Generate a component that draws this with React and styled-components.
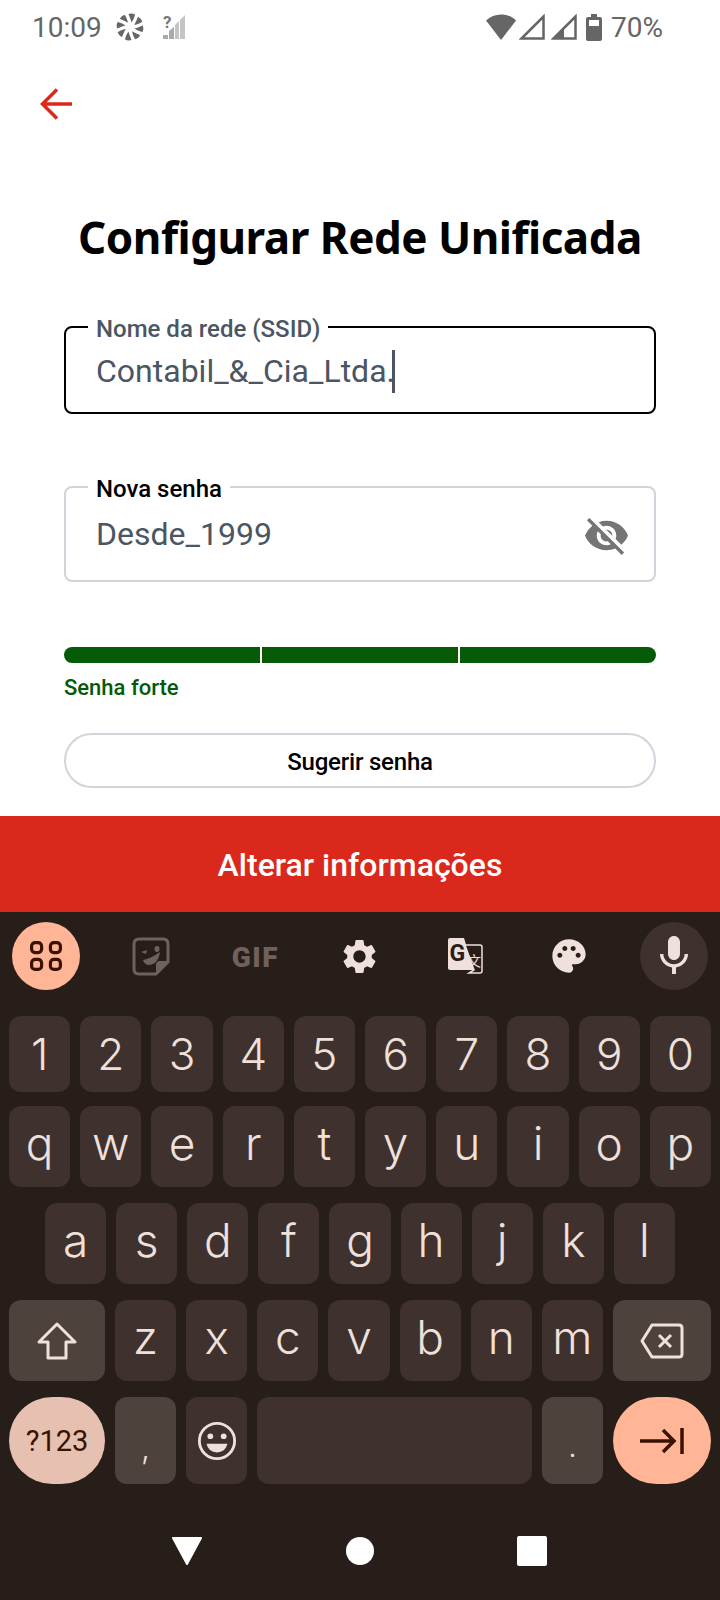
import React from 'react'
import styled, { createGlobalStyle } from 'styled-components'
import { MdMic, MdPalette, MdSettings, MdVisibilityOff } from 'react-icons/md'

const Global = createGlobalStyle`
  html, body { margin: 0; padding: 0; background: #fff; }
  * { box-sizing: border-box; }
`

const Phone = styled.div`
  width: 720px;
  height: 1600px;
  overflow: hidden;
  display: flex;
  flex-direction: column;
  font-family: Roboto, sans-serif;
  background: #fff;
`

const StatusBar = styled.div`
  height: 54px;
  padding: 0 57px 0 32px;
  display: flex;
  align-items: center;
  justify-content: space-between;
  color: #666;
  font-size: 28px;
`
const StatusGroup = styled.div`
  display: flex;
  align-items: center;
`
const Spacer = styled.span`
  width: ${p => p.$w}px;
`

const BackButton = styled.div`
  margin: 34px 0 0 40px;
  height: 32px;
  display: flex;
`

const Title = styled.h1`
  margin: 87px 0 0;
  font-family: 'Noto Sans', sans-serif;
  font-weight: 700;
  font-size: 44px;
  line-height: 60px;
  letter-spacing: -0.5px;
  text-align: center;
  color: #000;
`

const Form = styled.div`
  margin: 46px 64px 0;
  display: flex;
  flex-direction: column;
`

const Field = styled.fieldset`
  margin: ${p => p.$mt || 0}px 0 0;
  height: ${p => p.$h}px;
  min-width: 0;
  padding: ${p => p.$pt}px 24px 0 30px;
  display: flex;
  align-items: flex-start;
  justify-content: space-between;
  border: 2px solid ${p => (p.$active ? '#000' : '#d1d5db')};
  border-radius: 8px;
  legend {
    position: relative;
    top: 2px;
    margin-left: -8px;
    padding: 0 8px;
    font-size: 24px;
    font-weight: 500;
    line-height: 28px;
    color: ${p => (p.$active ? '#4b5563' : '#000')};
  }
`
const ValueRow = styled.div`
  display: flex;
  align-items: center;
  font-size: 32px;
  line-height: 44px;
  color: #4b5563;
`
const Caret = styled.span`
  width: 3px;
  height: 43px;
  margin-left: -3px;
  background: #4b5563;
`

const Strength = styled.div`
  margin-top: 65px;
  height: 16px;
  display: flex;
  gap: 2px;
  border-radius: 8px;
  overflow: hidden;
`
const StrengthPart = styled.div`
  flex: 1;
  background: #055a07;
`
const StrengthText = styled.div`
  margin-top: 11px;
  font-size: 22px;
  font-weight: 500;
  line-height: 28px;
  color: #055a07;
`
const SuggestButton = styled.button`
  margin-top: 31px;
  height: 55px;
  padding-top: 3px;
  background: #fff;
  border: 2px solid #d1d5db;
  border-radius: 28px;
  font-family: Roboto, sans-serif;
  font-size: 24px;
  font-weight: 500;
  letter-spacing: -0.2px;
  color: #000;
`
const SubmitButton = styled.button`
  margin-top: 28px;
  height: 96px;
  width: 100%;
  flex: none;
  padding-top: 3px;
  border: 0;
  background: #da291c;
  color: #fff;
  font-family: Roboto, sans-serif;
  font-size: 32px;
  font-weight: 500;
`

const Keyboard = styled.div`
  flex: 1;
  background: #271d19;
  color: #efe0db;
  display: flex;
  flex-direction: column;
  padding-top: 10px;
`
const Toolbar = styled.div`
  height: 68px;
  padding: 0 12px;
  margin-bottom: 26px;
  display: flex;
  align-items: center;
  justify-content: space-between;
`
const ToolSlot = styled.div`
  width: 68px;
  height: 68px;
  border-radius: 50%;
  display: flex;
  align-items: center;
  justify-content: center;
  background: ${p => p.$bg || 'transparent'};
`
const GifLabel = styled.span`
  padding-top: 3px;
  font-family: Roboto, sans-serif;
  font-weight: 900;
  font-size: 28px;
  letter-spacing: 1.5px;
  color: #6f625d;
`
const KeyRow = styled.div`
  height: ${p => p.$h}px;
  margin-bottom: ${p => p.$mb || 0}px;
  padding: 0 ${p => p.$inset || 9}px;
  display: flex;
  gap: 10px;
`
const Key = styled.div`
  flex: ${p => (p.$w ? `0 0 ${p.$w}px` : '1')};
  min-width: 0;
  border-radius: ${p => (p.$round ? '44px' : '12px')};
  background: ${p => p.$bg || '#3e312e'};
  display: flex;
  justify-content: center;
  align-items: ${p => (p.$low ? 'flex-end' : 'center')};
  padding-bottom: ${p => p.$pb || 0}px;
  font-family: Inter, sans-serif;
  font-weight: 300;
  font-size: ${p => p.$size || 46}px;
  line-height: 56px;
`
const SymbolsLabel = styled.span`
  font-family: Roboto, sans-serif;
  font-weight: 400;
  font-size: 29px;
  color: #3a1200;
`
const NavBar = styled.div`
  margin-top: 52px;
  padding-right: 3px;
  display: flex;
  align-items: center;
  justify-content: center;
  gap: 143px;
`

const Pinwheel = () => (
  <svg width="28" height="28" viewBox="0 0 28 28" fill="#666">
    {[0, 45, 90, 135, 180, 225, 270, 315].map(a => (
      <path key={a} d="M15.500 9.500C15 7 13.500 4 12.500 1Q16 0 19 1.500C18.500 4 17.500 7 15.500 9.500Z" transform={`rotate(${a} 14 14)`} />
    ))}
  </svg>
)
const NoSignal = () => (
  <svg width="22" height="26" viewBox="0 0 22 26" overflow="visible" style={{ marginLeft: 19 }}>
    <text x="0" y="14" fontFamily="Roboto, sans-serif" fontWeight="700" fontSize="17" fill="#777">?</text>
    <path d="M0 25v-4l5 0v4z" fill="#aaa" />
    <path d="M6 25v-8l5-4v12z" fill="#aaa" />
    <path d="M12 25v-14l4-4v18z" fill="#c4c4c4" />
    <path d="M17 25v-19l5-5v24z" fill="#c4c4c4" />
  </svg>
)
const Wifi = () => (
  <svg width="30" height="26" viewBox="0 0 30 26" fill="#666">
    <path d="M0 6.500C8 -1.500 22 -1.500 30 6.500L15 26Z" />
  </svg>
)
const CellTriangle = ({ fill }) => (
  <svg width="26" height="26" viewBox="0 0 26 26">
    {fill && <path d="M1 25 L13 13 V25Z" fill="#666" />}
    <path d="M2.500 24.500 L24.500 2.500 V24.500Z" fill="none" stroke="#666" strokeWidth="2.500" />
  </svg>
)
const Battery = () => (
  <svg width="16" height="27" viewBox="0 0 16 27">
    <path d="M5 0h6v3h3q2 0 2 2v20q0 2-2 2H2q-2 0-2-2V5q0-2 2-2h3z" fill="#666" />
    <rect x="3" y="6" width="10" height="6" fill="#fff" />
  </svg>
)
const BackArrow = () => (
  <svg width="32" height="32" viewBox="0 0 32 32" fill="none" stroke="#da291c" strokeWidth="3.5">
    <path d="M32 16H3M17 1.500L2.500 16L17 30.500" />
  </svg>
)
const Widgets = () => (
  <svg width="32" height="30" viewBox="0 0 32 30" fill="none" stroke="#3a1200" strokeWidth="3.2">
    <rect x="1.600" y="1.600" width="10" height="10" rx="3.500" />
    <rect x="20.400" y="1.600" width="10" height="10" rx="3.500" />
    <rect x="1.600" y="18.400" width="10" height="10" rx="3.500" />
    <rect x="20.400" y="18.400" width="10" height="10" rx="3.500" />
  </svg>
)
const Sticker = () => (
  <svg width="38" height="39" viewBox="0 0 38 39" fill="none">
    <path d="M7 2H31Q36 2 36 7V25L24 37H7Q2 37 2 32V7Q2 2 7 2Z" stroke="#6f625d" strokeWidth="3" />
    <path d="M36 24H28Q24 24 24 28V37Z" fill="#6f625d" />
    <path d="M9 15L15 13L14 17Z" fill="#6f625d" />
    <ellipse cx="25" cy="12" rx="2.500" ry="3" fill="#6f625d" />
    <path d="M11 23Q20 21 28 15Q26 28 16 28Q12 27 11 23Z" fill="#6f625d" />
  </svg>
)
const Translate = () => (
  <svg width="36" height="38" viewBox="0 0 36 38" overflow="visible">
    <path d="M3 1H17L27 33H3Q1 33 1 31V3Q1 1 3 1Z" fill="#efe0db" />
    <path d="M17 8H33Q35 8 35 10V34Q35 36 33 36H22L27 33L18 8Z" fill="#271d19" stroke="#efe0db" strokeWidth="1.500" />
    <text x="2.500" y="24" fontFamily="Roboto, sans-serif" fontWeight="700" fontSize="23" fill="#271d19">G</text>
    <text x="20" y="29" fontFamily="'Noto Sans CJK SC', sans-serif" fontSize="14" fill="#efe0db">文</text>
  </svg>
)
const Shift = () => (
  <svg width="40" height="38" viewBox="0 0 40 38" fill="none" stroke="#efe0db" strokeWidth="3" strokeLinejoin="round">
    <path d="M20 2L38 20H29V36H11V20H2Z" />
  </svg>
)
const Backspace = () => (
  <svg width="44" height="36" viewBox="0 0 44 36" fill="none" stroke="#efe0db" strokeWidth="3" strokeLinejoin="round">
    <path d="M12 2H39Q42 2 42 5V31Q42 34 39 34H12L2 18Z" />
    <path d="M19 12L31 24M31 12L19 24" />
  </svg>
)
const Emoji = () => (
  <svg width="40" height="40" viewBox="0 0 42 42" fill="none">
    <circle cx="21" cy="21" r="18.500" stroke="#efe0db" strokeWidth="3" />
    <circle cx="14" cy="16" r="3" fill="#efe0db" />
    <circle cx="28" cy="16" r="3" fill="#efe0db" />
    <path d="M10 24H32Q30 33 21 33Q12 33 10 24Z" fill="#efe0db" />
  </svg>
)
const NextField = () => (
  <svg width="44" height="26" viewBox="0 0 44 26" fill="none" stroke="#3a1200" strokeWidth="3.500">
    <path d="M0 13H34M23 2L34 13L23 24M42 0V26" />
  </svg>
)
const NavBack = () => (
  <svg width="32" height="29" viewBox="0 0 32 29" fill="#fff">
    <path d="M2 1H30L16 27Z" stroke="#fff" strokeWidth="2" strokeLinejoin="round" />
  </svg>
)
const NavHome = () => (
  <svg width="28" height="28" viewBox="0 0 28 28" fill="#fff"><circle cx="14" cy="14" r="14" /></svg>
)
const NavRecent = () => (
  <svg width="30" height="30" viewBox="0 0 30 30" fill="#fff"><rect width="30" height="30" rx="2" /></svg>
)

const letters = row => row.split('').map(c => <Key key={c} $pb={7}>{c}</Key>)

const App = () => (
  <Phone>
    <Global />
    <StatusBar>
      <StatusGroup>
        <span>10:09</span>
        <Spacer $w={14} />
        <Pinwheel />
        <NoSignal />
      </StatusGroup>
      <StatusGroup>
        <Wifi />
        <Spacer $w={3} />
        <CellTriangle />
        <Spacer $w={6} />
        <CellTriangle fill />
        <Spacer $w={9} />
        <Battery />
        <Spacer $w={9} />
        <span>70%</span>
      </StatusGroup>
    </StatusBar>
    <BackButton>
      <BackArrow />
    </BackButton>
    <Title>Configurar Rede Unificada</Title>
    <Form>
      <Field $h={101} $pt={8} $active>
        <legend>Nome da rede (SSID)</legend>
        <ValueRow>
          Contabil_&amp;_Cia_Ltda.
          <Caret />
        </ValueRow>
      </Field>
      <Field $h={109} $mt={59} $pt={11}>
        <legend>Nova senha</legend>
        <ValueRow>Desde_1999</ValueRow>
        <MdVisibilityOff size={47} color="#757575" />
      </Field>
      <Strength>
        <StrengthPart />
        <StrengthPart />
        <StrengthPart />
      </Strength>
      <StrengthText>Senha forte</StrengthText>
      <SuggestButton>Sugerir senha</SuggestButton>
    </Form>
    <SubmitButton>Alterar informações</SubmitButton>
    <Keyboard>
      <Toolbar>
        <ToolSlot $bg="#ffb596"><Widgets /></ToolSlot>
        <ToolSlot><Sticker /></ToolSlot>
        <ToolSlot><GifLabel>GIF</GifLabel></ToolSlot>
        <ToolSlot><MdSettings size={41} /></ToolSlot>
        <ToolSlot><Translate /></ToolSlot>
        <ToolSlot><MdPalette size={40} /></ToolSlot>
        <ToolSlot $bg="#3e312e"><MdMic size={48} /></ToolSlot>
      </Toolbar>
      <KeyRow $h={76} $mb={14}>
        {'1234567890'.split('').map(c => <Key key={c} $size={44}>{c}</Key>)}
      </KeyRow>
      <KeyRow $h={81} $mb={16}>{letters('qwertyuiop')}</KeyRow>
      <KeyRow $h={81} $mb={16} $inset={45}>{letters('asdfghjkl')}</KeyRow>
      <KeyRow $h={81} $mb={16}>
        <Key $w={96} $bg="#4e423d"><Shift /></Key>
        {letters('zxcvbnm')}
        <Key $w={98} $bg="#4e423d"><Backspace /></Key>
      </KeyRow>
      <KeyRow $h={87}>
        <Key $w={96} $round $bg="#e6c0b0"><SymbolsLabel>?123</SymbolsLabel></Key>
        <Key $bg="#4e423d" $low $size={32} $pb={8}>,</Key>
        <Key><Emoji /></Key>
        <Key $w={275} />
        <Key $bg="#4e423d" $low $size={30} $pb={10}>.</Key>
        <Key $w={98} $round $bg="#ffb596"><NextField /></Key>
      </KeyRow>
      <NavBar>
        <NavBack />
        <NavHome />
        <NavRecent />
      </NavBar>
    </Keyboard>
  </Phone>
)

export default App
